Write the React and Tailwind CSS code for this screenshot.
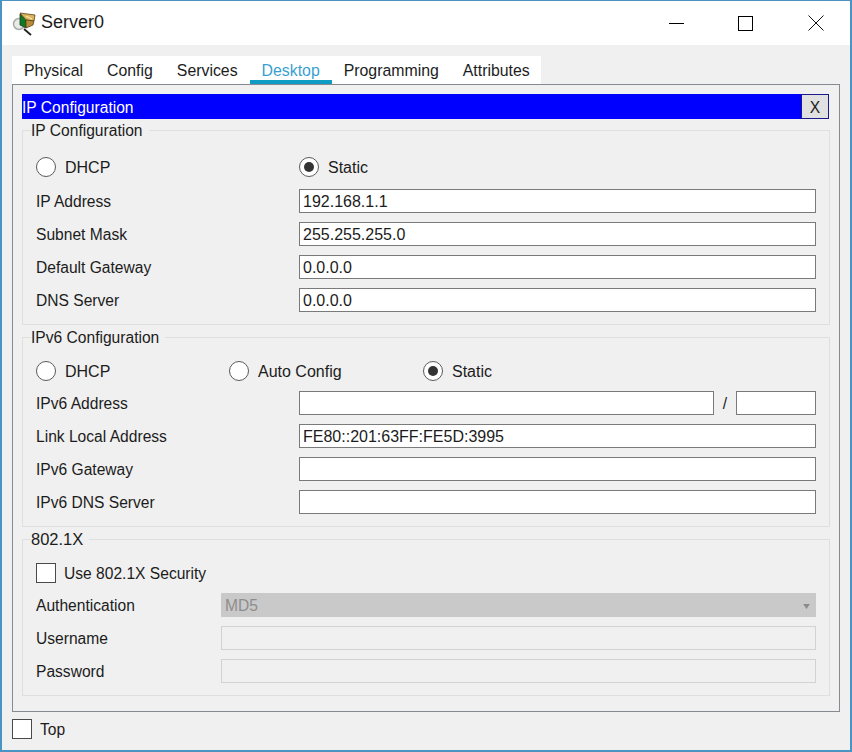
import React from "react";

const Radio = ({ checked }) => (
  <span className="flex h-5 w-5 shrink-0 items-center justify-center rounded-full border border-[#5a5a5a] bg-white">
    {checked && <span className="h-[10px] w-[10px] rounded-full bg-[#333333]" />}
  </span>
);

const Text = ({ className = "", children }) => <span className={`pt-[2px] ${className}`}>{children}</span>;

const RadioItem = ({ label, checked, className = "" }) => (
  <div className={`flex items-center gap-[9px] text-[16px] ${className}`}>
    <Radio checked={checked} />
    <Text>{label}</Text>
  </div>
);

const Box = () => <span className="h-5 w-5 shrink-0 border border-[#4a4a4a] bg-white" />;

const Input = ({ value = "", className = "flex-1" }) => (
  <div className={`flex h-6 items-center border border-[#7a7a7a] bg-white pl-[3px] pt-[2px] text-[16px] ${className}`}>{value}</div>
);

const Row = ({ label, value, w = "w-[263px]", disabled }) => (
  <div className="flex h-6 items-center">
    <Text className={`shrink-0 ${w}`}>{label}</Text>
    {disabled ? (
      <div className="h-6 flex-1 border border-[#d2d2d2] bg-[#f0f0f0]" />
    ) : (
      <Input value={value} />
    )}
  </div>
);

const Group = ({ title, className, titleClass = "top-[-10px]", children }) => (
  <section className={`relative border border-[#dfdfdf] px-[13px] ${className}`}>
    <span className={`absolute left-[8px] bg-[#f0f0f0] pr-[6px] leading-[20px] ${titleClass}`}>{title}</span>
    {children}
  </section>
);

const ServerIcon = () => (
  <svg width="24" height="25" viewBox="0 0 24 25" className="shrink-0">
    <circle cx="7" cy="13" r="5.5" fill="#e8ece8" stroke="#a8aca8" strokeWidth="1.5" />
    <path d="M12 18l7 6" stroke="#222" strokeWidth="1.8" />
    <path d="M8 3l6 6v8l-6-3z" fill="#0f7a25" stroke="#1f3a1a" strokeWidth="0.8" />
    <path d="M8 2l15 2-1 6-8-1z" fill="#d9b45c" stroke="#5a4416" strokeWidth="0.8" />
    <path d="M14 9l8 1-1 4-7 3z" fill="#b88a3a" stroke="#5a4416" strokeWidth="0.8" />
    <path d="M14 5l6 3" stroke="#fff3c0" strokeWidth="1" />
  </svg>
);

const tabs = ["Physical", "Config", "Services", "Desktop", "Programming", "Attributes"];

export default function App() {
  return (
    <div className="flex h-[752px] w-[852px] flex-col border-x-2 border-b-2 border-t border-[#4a94c4] bg-[#f0f0f0] font-['Liberation_Sans',sans-serif] text-[15.6px] leading-[20px] text-[#1c1c1c]">
      <header className="flex h-[44px] shrink-0 items-center bg-white pl-[10px]">
        <ServerIcon />
        <span className="ml-[5px] pb-[2px] text-[18px]">Server0</span>
        <div className="ml-auto flex items-center">
          <span className="h-px w-[15px] bg-black" />
          <span className="ml-[54px] h-[15px] w-[15px] border-[1.5px] border-black" />
          <svg width="16" height="16" viewBox="0 0 16 16" className="ml-[55px] mr-[26px]">
            <path d="M.5.5l15 15M15.5.5l-15 15" stroke="#111" strokeWidth="1" />
          </svg>
        </div>
      </header>

      <main className="flex flex-1 flex-col px-[10px] pt-[11px]">
        <nav className="flex h-[28px] w-[529px] bg-white text-[15.85px]">
          {tabs.map((t) => (
            <div
              key={t}
              className={`flex h-full items-center px-3 ${
                t === "Desktop" ? "border-b-4 border-[#0f9cc4] pt-[6px] text-[#3a9fd0]" : "pt-[2px]"
              }`}
            >
              {t}
            </div>
          ))}
        </nav>

        <div className="h-[628px] border border-[#858a90] px-[9px] pt-[9px]">
          <div className="mr-px flex h-[25px] items-center justify-between bg-[#0000ff] text-white">
            <Text>IP Configuration</Text>
            <button className="flex h-[25px] w-[28px] items-center justify-center border border-[#1a1a8c] bg-[#e1e1e1] pt-[2px] text-[#1c1c1c]">
              X
            </button>
          </div>

          <Group title="IP Configuration" className="mt-[11px] h-[195px] pt-[24px]">
            <div className="flex h-6 items-center">
              <RadioItem label="DHCP" className="w-[263px]" />
              <RadioItem label="Static" checked />
            </div>
            <div className="mt-[10px] flex flex-col gap-[9px]">
              <Row label="IP Address" value="192.168.1.1" />
              <Row label="Subnet Mask" value="255.255.255.0" />
              <Row label="Default Gateway" value="0.0.0.0" />
              <Row label="DNS Server" value="0.0.0.0" />
            </div>
          </Group>

          <Group title="IPv6 Configuration" className="mt-[12px] h-[190px] pt-[21px]">
            <div className="flex h-6 items-center">
              <RadioItem label="DHCP" className="w-[193px]" />
              <RadioItem label="Auto Config" className="w-[194px]" />
              <RadioItem label="Static" checked />
            </div>
            <div className="mt-[8px] flex flex-col gap-[9px]">
              <div className="flex h-6 items-center">
                <Text className="w-[263px] shrink-0">IPv6 Address</Text>
                <Input className="w-[415px]" />
                <Text className="w-[22px] text-center">/</Text>
                <Input className="w-[80px]" />
              </div>
              <Row label="Link Local Address" value="FE80::201:63FF:FE5D:3995" />
              <Row label="IPv6 Gateway" />
              <Row label="IPv6 DNS Server" />
            </div>
          </Group>

          <Group title="802.1X" titleClass="top-[-11px] text-[16.5px]" className="mt-[12px] h-[157px] pt-[23px]">
            <div className="flex h-5 items-center gap-2">
              <Box />
              <Text>Use 802.1X Security</Text>
            </div>
            <div className="mt-[10px] flex flex-col gap-[9px]">
              <div className="flex h-6 items-center">
                <Text className="w-[185px] shrink-0">Authentication</Text>
                <div className="flex h-6 flex-1 items-center justify-between bg-[#c9c9c9] pl-[4px] pr-[6px] pt-[2px] text-[#8e8e8e]">
                  MD5
                  <svg width="7" height="5" viewBox="0 0 8 6">
                    <path d="M0 0h8L4 6z" fill="#8a8a8a" />
                  </svg>
                </div>
              </div>
              <Row label="Username" w="w-[185px]" disabled />
              <Row label="Password" w="w-[185px]" disabled />
            </div>
          </Group>
        </div>

        <div className="flex h-[34px] items-center gap-2">
          <Box />
          <span className="pt-[2px]">Top</span>
        </div>
      </main>
    </div>
  );
}
